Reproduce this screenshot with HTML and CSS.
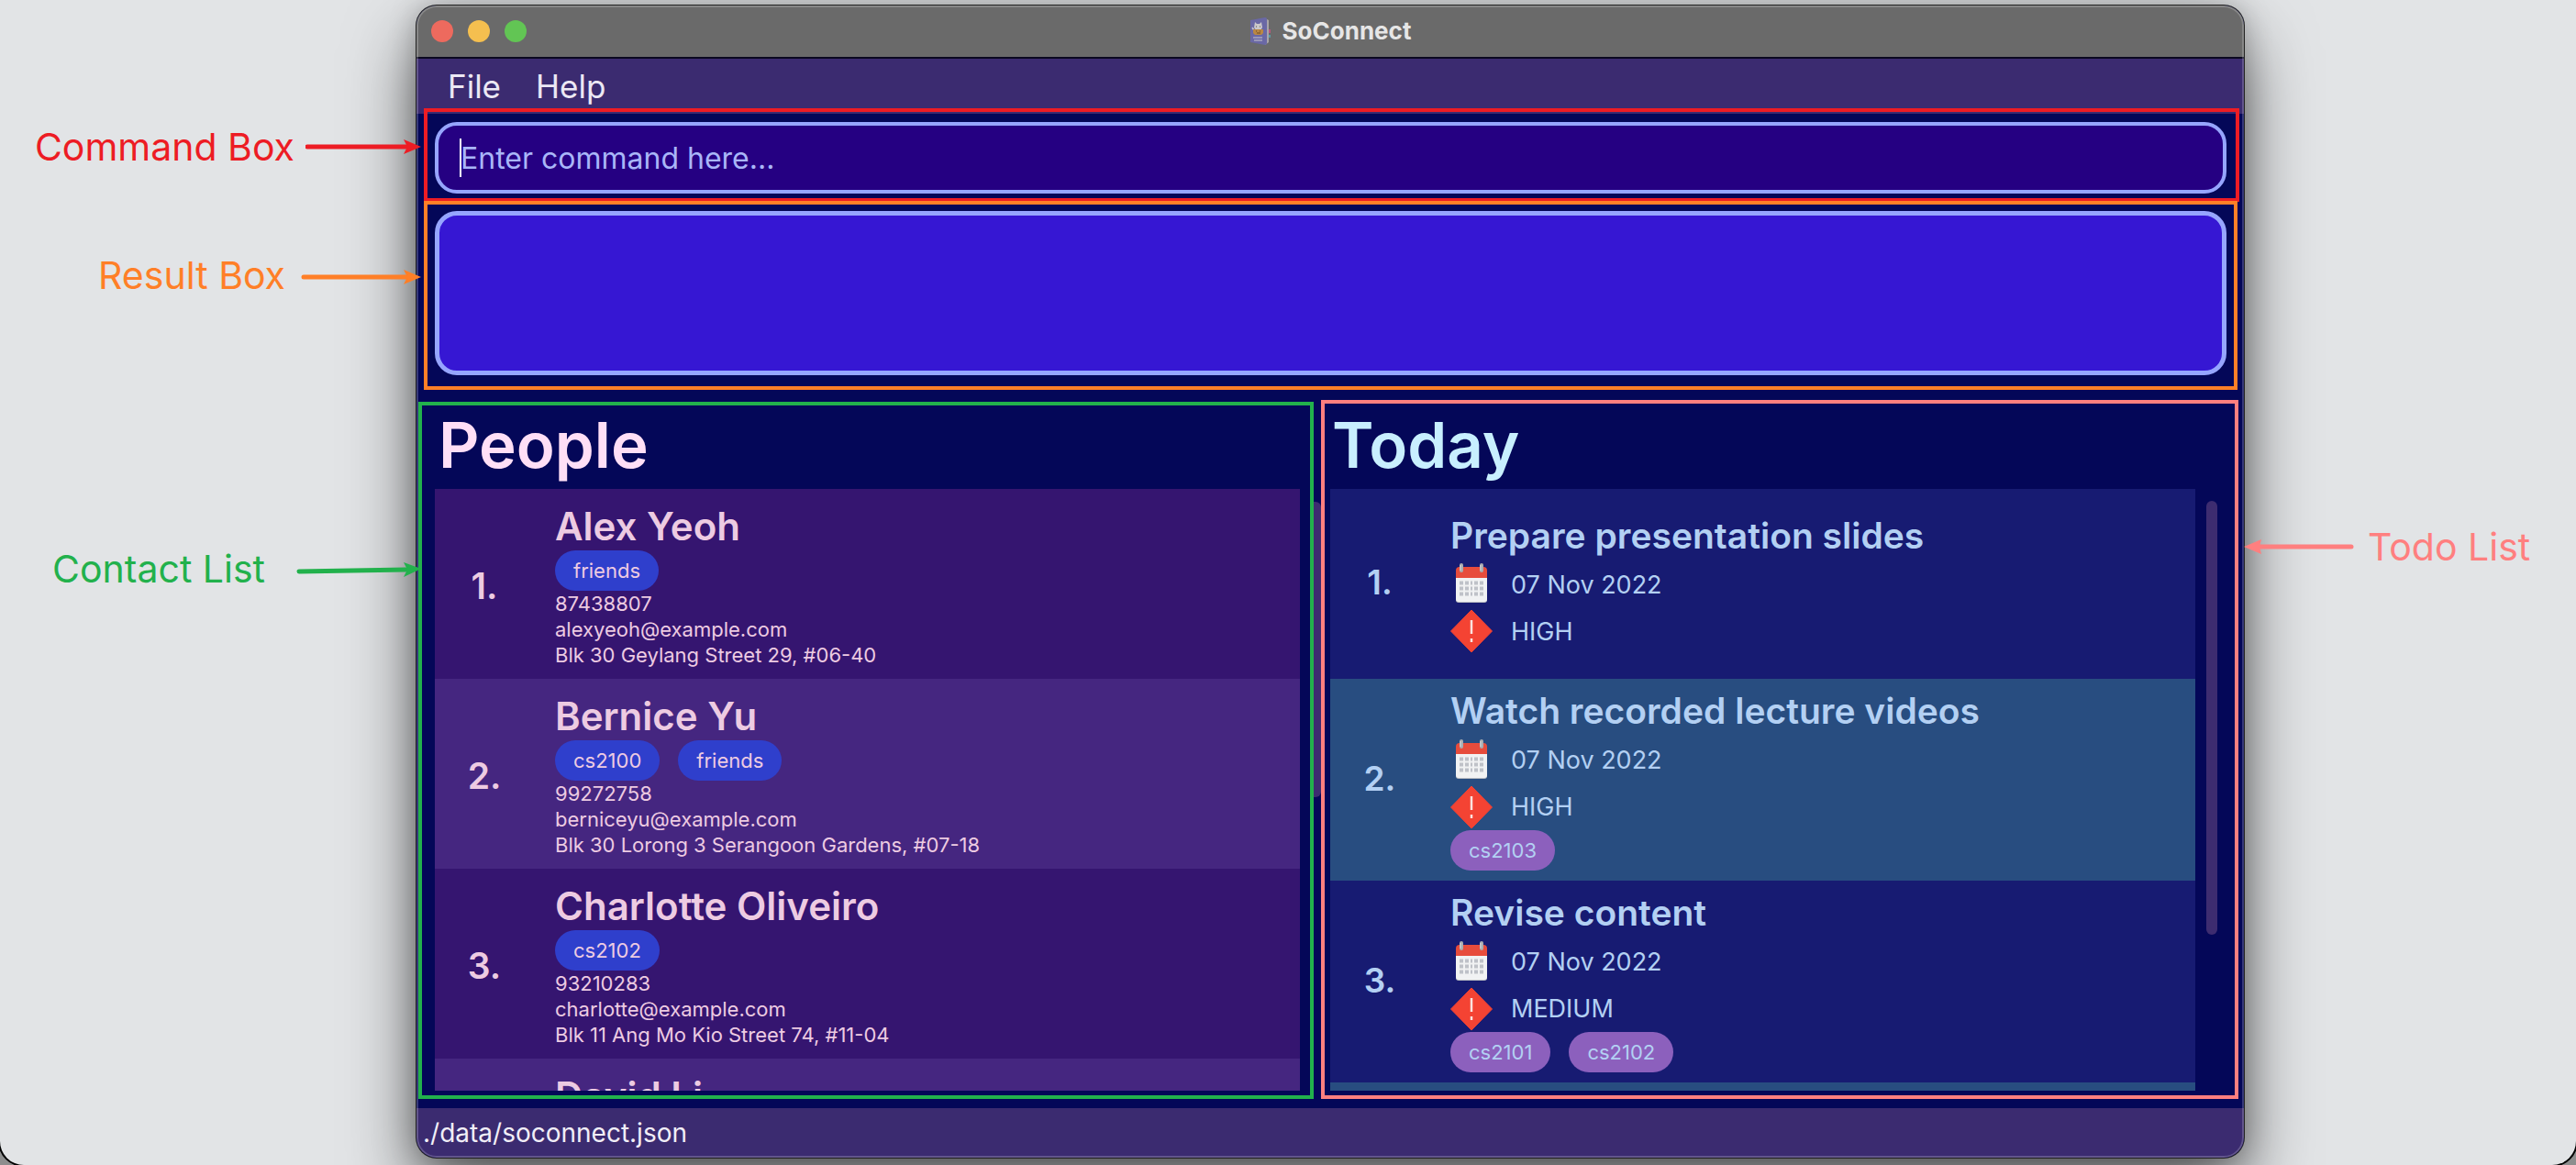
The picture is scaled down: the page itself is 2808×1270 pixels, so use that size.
FILE: index.html
```html
<!DOCTYPE html>
<html lang="en">
<head>
<meta charset="utf-8">
<title>SoConnect</title>
<link rel="stylesheet" href="styles.css">
</head>
<body>
<svg class="defs" aria-hidden="true">
  <symbol id="calendar" viewBox="0 0 46 48">
    <rect x="6" y="10" width="34" height="34" rx="3" fill="#b9bcc2"/>
    <path d="M6 9a4 4 0 0 1 4-4h26a4 4 0 0 1 4 4v8H6z" fill="#e74c3c"/>
    <path d="M6 17h34v23a3 3 0 0 1-3 3H9a3 3 0 0 1-3-3z" fill="#f1f2f3"/>
    <path d="M10 22.500h26M10 28.500h26M10 34.500h26" stroke="#bfc2c8" stroke-width="4" stroke-dasharray="4 2 4 2 2 2 4 2 4"/>
    <rect x="10" y="1" width="4" height="10" rx="2" fill="#a9adb0"/>
    <rect x="32" y="1" width="4" height="10" rx="2" fill="#a9adb0"/>
    <path d="M11 3v6M33 3v6" stroke="#d5d8da" stroke-width="1"/>
  </symbol>
  <symbol id="priority" viewBox="0 0 46 48">
    <path d="M23 1 45.500 24 23 47 .500 24z" fill="#f44333" stroke="#f44333" stroke-linejoin="round"/>
    <path d="M23 12v15M23 32v4" stroke="#fbe3df" stroke-width="2.500"/>
  </symbol>
</svg>

<div class="scene">
  <aside class="callouts callouts-left">
    <p class="callout callout-command"><span>Command Box</span>
      <svg class="arrow" viewBox="0 0 126 28" width="126" height="28"><path d="M2 14h108" fill="none" stroke="currentColor" stroke-width="5" stroke-linecap="round"/><path d="M126 14 107 6l4 8-4 8z" fill="currentColor"/></svg></p>
    <p class="callout callout-result"><span>Result Box</span>
      <svg class="arrow" viewBox="0 0 131 28" width="131" height="28"><path d="M3 16h112" fill="none" stroke="currentColor" stroke-width="5" stroke-linecap="round"/><path d="M131 16 112 8l4 8-4 8z" fill="currentColor"/></svg></p>
    <p class="callout callout-contact"><span>Contact List</span>
      <svg class="arrow" viewBox="0 0 136 28" width="136" height="28"><path d="M3 17 119 15" fill="none" stroke="currentColor" stroke-width="5" stroke-linecap="round"/><path d="M136 14 117 7l4 8-4 8z" fill="currentColor"/></svg></p>
  </aside>

  <main class="window">
    <header class="titlebar">
      <div class="lights"><button class="light close" aria-label="Close"></button><button class="light minimise" aria-label="Minimise"></button><button class="light zoom" aria-label="Zoom"></button></div>
      <h1 class="app-name">
        <svg viewBox="0 0 24 32" width="24" height="32" aria-hidden="true">
          <path d="M17 2l4 2v24l-4 3z" fill="#a9a5a8"/>
          <path d="M21 14h2v4h-2z" fill="#b8577c"/><path d="M21 20h2v3h-2z" fill="#5c9aa5"/>
          <path d="M1 4 17 1q2 0 2 2v26q0 2-2 2L1 28z" fill="#6a68a5"/>
          <path d="M6 6l2 2h3l2-2 1 6-2 3H7l-2-3z" fill="#cbc8ca"/><path d="M3 12l2 3" stroke="#cbc8ca" stroke-width="1.500"/>
          <path d="M7 11h1M11 11h1" stroke="#555" stroke-width="1"/>
          <path d="M4 14h11v4l-2 2H6l-2-2z" fill="#b98744"/><path d="M7 16h1M11 16h1M8 18h4" stroke="#6d4b25"/>
          <path d="M4 23h10M5 26h9" stroke="#a9a7c0" stroke-width="1.500"/>
        </svg>
        <span>SoConnect</span>
      </h1>
    </header>

    <nav class="menubar"><button>File</button><button>Help</button></nav>

    <section class="command-area">
      <input class="command-input" type="text" aria-label="Command" placeholder="Enter command here...">
      <span class="caret"></span>
    </section>

    <section class="result-area">
      <textarea class="result" aria-label="Result" readonly></textarea>
    </section>

    <div class="panes">
      <section class="pane people">
        <h2>People</h2>
        <ol class="list">
          <li>
            <span class="index">1.</span>
            <div class="details">
              <h3>Alex Yeoh</h3>
              <div class="tags"><span>friends</span></div>
              <p>87438807</p><p>alexyeoh@example.com</p><p>Blk 30 Geylang Street 29, #06-40</p>
            </div>
          </li>
          <li>
            <span class="index">2.</span>
            <div class="details">
              <h3>Bernice Yu</h3>
              <div class="tags"><span>cs2100</span><span>friends</span></div>
              <p>99272758</p><p>berniceyu@example.com</p><p>Blk 30 Lorong 3 Serangoon Gardens, #07-18</p>
            </div>
          </li>
          <li>
            <span class="index">3.</span>
            <div class="details">
              <h3>Charlotte Oliveiro</h3>
              <div class="tags"><span>cs2102</span></div>
              <p>93210283</p><p>charlotte@example.com</p><p>Blk 11 Ang Mo Kio Street 74, #11-04</p>
            </div>
          </li>
          <li>
            <span class="index"></span>
            <div class="details"><h3>David Li</h3></div>
          </li>
        </ol>
      </section>

      <div class="track"><div class="thumb thumb-people"></div></div>

      <section class="pane today">
        <h2>Today</h2>
        <div class="scroller">
          <ol class="list">
            <li>
              <span class="index">1.</span>
              <div class="details">
                <h3>Prepare presentation slides</h3>
                <p><svg><use href="#calendar"/></svg>07 Nov 2022</p>
                <p><svg><use href="#priority"/></svg>HIGH</p>
              </div>
            </li>
            <li>
              <span class="index">2.</span>
              <div class="details">
                <h3>Watch recorded lecture videos</h3>
                <p><svg><use href="#calendar"/></svg>07 Nov 2022</p>
                <p><svg><use href="#priority"/></svg>HIGH</p>
                <div class="tags"><span>cs2103</span></div>
              </div>
            </li>
            <li>
              <span class="index">3.</span>
              <div class="details">
                <h3>Revise content</h3>
                <p><svg><use href="#calendar"/></svg>07 Nov 2022</p>
                <p><svg><use href="#priority"/></svg>MEDIUM</p>
                <div class="tags"><span>cs2101</span><span>cs2102</span></div>
              </div>
            </li>
            <li></li>
          </ol>
          <div class="track"><div class="thumb thumb-today"></div></div>
        </div>
      </section>
    </div>

    <footer class="statusbar">./data/soconnect.json</footer>
  </main>

  <aside class="callouts callouts-right">
    <p class="callout callout-todo">
      <svg class="arrow" viewBox="0 0 120 28" width="120" height="28"><path d="M14 14h103" fill="none" stroke="currentColor" stroke-width="5" stroke-linecap="round"/><path d="M0 14 19 6l-2 8 2 8z" fill="currentColor"/></svg>
      <span>Todo List</span></p>
  </aside>
</div>
</body>
</html>
```
FILE: styles.css
```css
* { box-sizing: border-box; margin: 0; padding: 0; }

html { background: #8d8e8e; }
body { font-family: Inter, "Liberation Sans", sans-serif; }
button, input, textarea { font: inherit; color: inherit; border: 0; background: none; }
ol { list-style: none; }
.defs { display: none; }

.scene {
  display: grid;
  grid-template-columns: 454fr 1992fr 362fr;
  height: 100vh;
  padding: 6px 0 8px;
  overflow: hidden;
  background: #e2e4e6;
  border-radius: 0 0 26px 26px;
  box-shadow: 0 0 0 2px #000;
}

/* Callouts beside the window */
.callouts { position: relative; z-index: 2; display: flex; flex-direction: column; }
.callout { display: flex; align-items: center; font-size: 41px; line-height: 48px; white-space: nowrap; }
.arrow { flex: none; }
.callouts-left { align-items: flex-end; margin-right: -5px; padding-top: 130px; }
.callout-command { gap: 12px; color: #ed1c24; }
.callout-result { gap: 17px; margin-top: 92px; color: #ff7f27; }
.callout-contact { gap: 34px; margin-top: 272px; color: #22b14c; }
.callouts-right { padding-top: 566px; }
.callout-todo { gap: 15px; color: #ff7f7f; }

/* Application window */
.window {
  position: relative;
  display: flex;
  flex-direction: column;
  min-width: 0;
  min-height: 0;
  overflow: hidden;
  color: #fff;
  background: #040758;
  border-radius: 22px;
  box-shadow: 0 0 0 1px #222, 0 36px 76px rgba(0, 0, 0, .6), 0 0 30px rgba(0, 0, 0, .25);
}
.window::after {
  content: "";
  position: absolute;
  inset: 0;
  border: 2px solid rgba(255, 255, 255, .2);
  border-radius: 22px;
  pointer-events: none;
}

.titlebar {
  display: grid;
  grid-template-columns: 1fr auto 1fr;
  align-items: center;
  flex: none;
  height: 58px;
  padding: 0 16px;
  background: #6a6a6a;
  border-bottom: 2px solid #0b0820;
}
.lights { display: flex; gap: 16px; }
.light { width: 24px; height: 24px; border-radius: 50%; }
.close { background: #ed6a5e; }
.minimise { background: #f5bf4f; }
.zoom { background: #62c554; }
.app-name { display: flex; align-items: center; gap: 12px; font-size: 26px; line-height: 32px; font-weight: 700; color: #e6e6e6; }

.menubar { display: flex; gap: 38px; flex: none; height: 60px; padding: 0 34px; background: #3b2b70; }
.menubar button { font-size: 35px; line-height: 60px; color: #ece8f4; }

.command-area { position: relative; z-index: 1; flex: none; margin: -6px 5px 0 8px; padding: 11px 10px 5px 8px; border: 4px solid #ed1c24; }
.command-input {
  display: block;
  width: 100%;
  height: 78px;
  padding: 0 24px;
  font-size: 32px;
  background: #250082;
  border: 4px solid #96a5ff;
  border-radius: 24px;
}
.command-input::placeholder { color: #a9b6f8; opacity: 1; }
.caret { position: absolute; left: 35px; top: 29px; width: 2px; height: 42px; background: #fff; }

.result-area { position: relative; z-index: 1; flex: none; margin: -1px 7px 0 8px; padding: 7px 8px 12px; border: 4px solid #ff7f27; }
.result {
  display: block;
  width: 100%;
  height: 179px;
  resize: none;
  background: #3617d3;
  border: 5px solid #96a5ff;
  border-radius: 24px;
}

/* Lists */
.panes { display: grid; grid-template-columns: 976fr 8px 1000fr; flex: 1; min-height: 0; margin: 11px 6px 10px 2px; }
.pane { display: flex; flex-direction: column; min-width: 0; min-height: 0; border: 4px solid; }
.people { margin-top: 2px; padding: 0 11px 5px 14px; border-color: #22b14c; }
.today { padding: 2px 19px 5px 6px; border-color: #ff7f7f; }
.pane h2 { flex: none; padding: 0 4px 4px; font-size: 69px; line-height: 87px; font-weight: 600; }
.people h2 { color: #ffdff6; }
.today h2 { padding-left: 2px; color: #c8efff; }
.scroller { display: flex; gap: 12px; flex: 1; min-height: 0; }
.list { flex: 1; min-height: 0; overflow: hidden; }
.list li { display: grid; grid-template-columns: 108px 1fr; column-gap: 23px; align-items: center; min-height: 207px; }
.index { text-align: center; font-weight: 600; }
.tags { display: flex; gap: 20px; }
.tags span { padding: 0 20px; font-size: 22px; line-height: 44px; border-radius: 22px; }

.people li { padding: 15px 0 12px; color: #edcbe2; background: #351570; }
.people li:nth-child(even) { background: #452680; }
.people li:last-child { align-items: start; }
.people .index { font-size: 39px; }
.people h3 { font-size: 42px; line-height: 52px; font-weight: 600; }
.people p { font-size: 22px; line-height: 28px; }
.people .tags span { background: #2f3fcc; }

.today li { padding: 6px 0 10px; color: #b3d0f3; background: #171b72; }
.today li:nth-child(even) { background: #284d80; }
.today li:nth-child(n+2) { min-height: 220px; }
.today .index { font-size: 37px; }
.today h3 { font-size: 39px; line-height: 56px; font-weight: 600; }
.today p { display: flex; align-items: center; gap: 20px; font-size: 27px; line-height: 51px; }
.today p svg { flex: none; width: 46px; height: 48px; }
.today .tags span { background: #8c60bd; }

.track .thumb { background: #3d2c70; }
.thumb-people { height: 322px; margin-top: 111px; border-radius: 0 6px 6px 0; }
.thumb-today { width: 12px; height: 473px; margin-top: 13px; border-radius: 6px; }

.statusbar { flex: none; padding: 0 7px; font-size: 28px; line-height: 54px; color: #f1eef7; background: #3b2b70; }
```
